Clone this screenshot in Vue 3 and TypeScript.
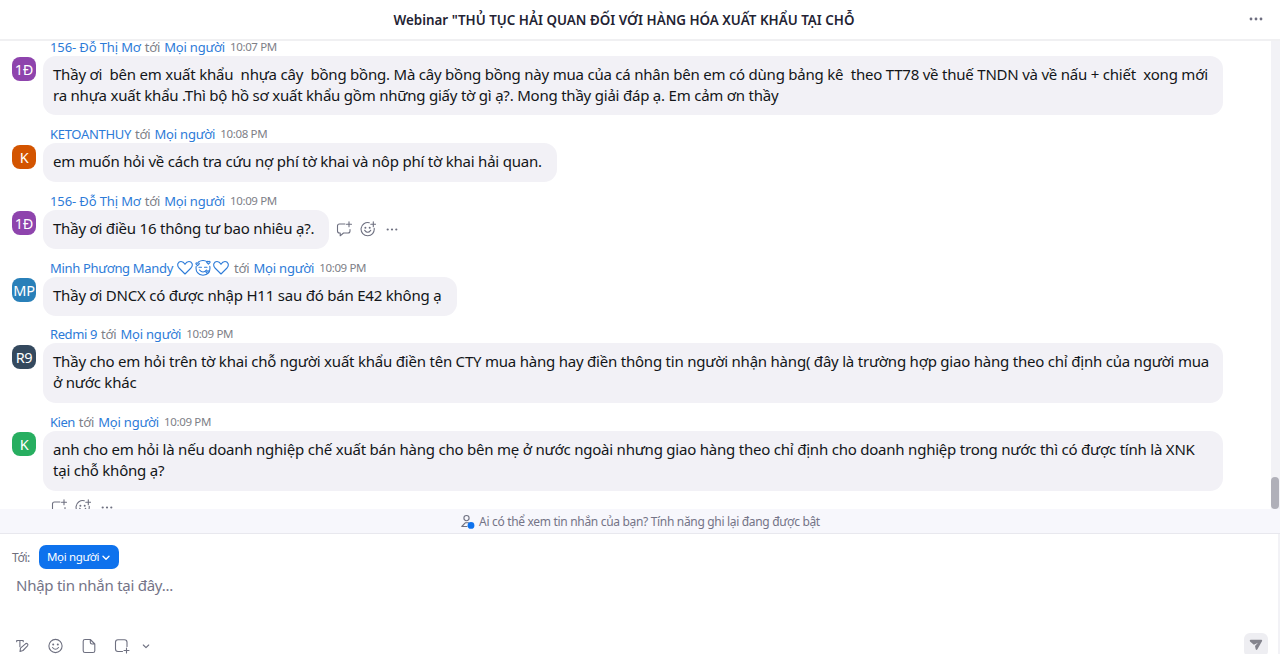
<script setup lang="ts">
interface Message {
  id: number;
  initials: string;
  color: string;
  sender: string;
  tracking: number;
  hearts?: boolean;
  time: string;
  lines: string[];
  width: number;
  actions?: 'side' | 'below';
}

const messages: Message[] = [
  {
    id: 1,
    initials: '1Đ',
    color: '#8e44ad',
    sender: '156- Đỗ Thị Mơ',
    tracking: -0.12,
    time: '10:07 PM',
    lines: [
      'Thầy ơi  bên em xuất khẩu  nhựa cây  bồng bồng. Mà cây bồng bồng này mua của cá nhân bên em có dùng bảng kê  theo TT78 về thuế TNDN và về nấu + chiết  xong mới',
      'ra nhựa xuất khẩu .Thì bộ hồ sơ xuất khẩu gồm những giấy tờ gì ạ?. Mong thầy giải đáp ạ. Em cảm ơn thầy',
    ],
    width: 1180,
  },
  {
    id: 2,
    initials: 'K',
    color: '#d35400',
    sender: 'KETOANTHUY',
    tracking: -0.3,
    time: '10:08 PM',
    lines: ['em muốn hỏi về cách tra cứu nợ phí tờ khai và nôp phí tờ khai hải quan.'],
    width: 514,
  },
  {
    id: 3,
    initials: '1Đ',
    color: '#8e44ad',
    sender: '156- Đỗ Thị Mơ',
    tracking: -0.12,
    time: '10:09 PM',
    lines: ['Thầy ơi điều 16 thông tư bao nhiêu ạ?.'],
    width: 286,
    actions: 'side',
  },
  {
    id: 4,
    initials: 'MP',
    color: '#2980b9',
    sender: 'Minh Phương Mandy',
    tracking: -0.32,
    hearts: true,
    time: '10:09 PM',
    lines: ['Thầy ơi DNCX có được nhập H11 sau đó bán E42 không ạ'],
    width: 414,
  },
  {
    id: 5,
    initials: 'R9',
    color: '#34495e',
    sender: 'Redmi 9',
    tracking: -0.4,
    time: '10:09 PM',
    lines: [
      'Thầy cho em hỏi trên tờ khai chỗ người xuất khẩu điền tên CTY mua hàng hay điền thông tin người nhận hàng( đây là trường hợp giao hàng theo chỉ định của người mua',
      'ở nước khác',
    ],
    width: 1180,
  },
  {
    id: 6,
    initials: 'K',
    color: '#27ae60',
    sender: 'Kien',
    tracking: -0.5,
    time: '10:09 PM',
    lines: [
      'anh cho em hỏi là nếu doanh nghiệp chế xuất bán hàng cho bên mẹ ở nước ngoài nhưng giao hàng theo chỉ định cho doanh nghiệp trong nước thì có được tính là XNK',
      'tại chỗ không ạ?',
    ],
    width: 1180,
    actions: 'below',
  },
];
</script>

<template>
  <div class="chat">
    <header class="topbar">
      <h1 class="title">Webinar "THỦ TỤC HẢI QUAN ĐỐI VỚI HÀNG HÓA XUẤT KHẨU TẠI CHỖ</h1>
      <svg class="more" width="14" height="4" viewBox="0 0 14 4">
        <circle cx="2" cy="2" r="1.4" /><circle cx="7" cy="2" r="1.4" /><circle cx="12" cy="2" r="1.4" />
      </svg>
    </header>

    <main class="history">
      <div class="messages">
        <article v-for="m in messages" :key="m.id" class="message">
          <div class="avatar" :style="{ background: m.color }">{{ m.initials }}</div>
          <div class="body">
            <div class="meta">
              <span class="name" :style="{ letterSpacing: m.tracking + 'px' }">{{ m.sender }}</span>
              <span v-if="m.hearts" class="emoji">
                <svg width="16" height="16" viewBox="0 0 16 16">
                  <path d="M8 14 2 8C-.7 4.800 1.300 1.500 4 1.500c1.900 0 3.200 1.300 4 2.800.8-1.500 2.100-2.800 4-2.800 2.700 0 4.700 3.300 2 6.500Z" />
                </svg>
                <svg width="16" height="16" viewBox="0 0 16 16">
                  <path d="M3.500 1.900Q8-.8 12.500 1.900M1.200 6.300C.3 11.500 3.300 15.200 8 15.200s7.700-3.700 6.800-8.900M4 7.300h2.500M9.500 7.300H12M4.500 10q3.500 4 7 0" />
                  <path d="M2.600 5.700 1.100 4.200c-.7-1.200.9-1.900 1.500-.9.600-1 2.200-.3 1.500.9ZM13.400 4.200l-1.500-1.500c-.7-1.200.9-1.900 1.500-.9.600-1 2.200-.3 1.500.9ZM12.500 13.700 11 12.200c-.7-1.200.9-1.900 1.500-.9.600-1 2.200-.3 1.500.9Z" />
                </svg>
                <svg width="16" height="16" viewBox="0 0 16 16">
                  <path d="M8 14 2 8C-.7 4.800 1.300 1.500 4 1.500c1.900 0 3.200 1.300 4 2.800.8-1.500 2.100-2.800 4-2.800 2.700 0 4.700 3.300 2 6.500Z" />
                </svg>
              </span>
              <span class="to">tới</span>
              <span class="name">Mọi người</span>
              <span class="time">{{ m.time }}</span>
            </div>
            <div class="row" :class="m.actions">
              <div class="bubble" :style="{ width: m.width + 'px' }">
                <div v-for="(line, i) in m.lines" :key="i" class="line">{{ line }}</div>
              </div>
              <div v-if="m.actions" class="actions">
                <svg width="16" height="16" viewBox="0 0 16 16">
                  <path d="M9 3H3.500Q1.500 3 1.500 5v5q0 2 2 2h.7v2.800L7.500 12H12q2 0 2-2V8.500M13 .8v5M10.500 3.300h5" />
                </svg>
                <svg width="16" height="16" viewBox="0 0 16 16">
                  <path d="M9.300 1.800A6.600 6.600 0 1 0 14.200 7.300M13.300.8v5M10.800 3.300h5M4.700 9.300q3 4 6 0" />
                  <circle class="dot" cx="5.4" cy="6.7" r="1" /><circle class="dot" cx="9.7" cy="6.7" r="1" />
                </svg>
                <svg width="16" height="16" viewBox="0 0 16 16">
                  <circle class="dot" cx="3.7" cy="8.5" r="1.1" /><circle class="dot" cx="8" cy="8.5" r="1.1" /><circle class="dot" cx="12.3" cy="8.5" r="1.1" />
                </svg>
              </div>
            </div>
          </div>
        </article>
      </div>
      <div class="scrollbar"><div class="thumb"></div></div>
    </main>

    <div class="notice">
      <svg width="14" height="15" viewBox="0 0 14 15">
        <circle cx="5.5" cy="4.1" r="2.6" />
        <path d="M7.500 8.700H4.500L.8 12.500H6" />
        <circle class="badge" cx="10" cy="11.4" r="3.4" />
      </svg>
      <span>Ai có thể xem tin nhắn của bạn? Tính năng ghi lại đang được bật</span>
    </div>

    <footer class="composer">
      <div class="recipient">
        <span class="label">Tới:</span>
        <button class="picker">
          <span>Mọi người</span>
          <svg width="8" height="6" viewBox="0 0 8 6"><path d="m1 1.300 3 3 3-3" /></svg>
        </button>
      </div>
      <div class="placeholder">Nhập tin nhắn tại đây...</div>
      <div class="tools">
        <svg width="16" height="16" viewBox="0 0 16 16">
          <path d="M1.700 3.700V2.500h6.500v1.200M4.900 2.500v6.300M5 13.500l.5-3.300 5-4.400q1-.8 2 .1.900 1 0 2L8 12.500Z" />
        </svg>
        <svg width="16" height="16" viewBox="0 0 16 16">
          <circle cx="7.5" cy="8" r="6.6" /><path d="M4.500 9.500q3 3.500 6 0" />
          <circle class="dot" cx="5.2" cy="6.5" r="1" /><circle class="dot" cx="9.8" cy="6.5" r="1" />
        </svg>
        <svg width="16" height="16" viewBox="0 0 16 16">
          <path d="M9.300 1.500H4Q2.200 1.500 2.200 3.300v9.400q0 1.800 1.800 1.800h8q1.800 0 1.800-1.800V6ZM9.300 1.500V4.300Q9.300 6 11 6h2.800" />
        </svg>
        <svg width="16" height="16" viewBox="0 0 16 16">
          <path d="M8.500 13.500H4Q1.500 13.500 1.500 11V4.200Q1.500 1.700 4 1.700h6.500Q13 1.700 13 4.200V8.500M12.500 10v5M10 12.500h5" />
        </svg>
        <svg class="caret" width="8" height="16" viewBox="0 0 8 16"><path d="m1.300 7 2.700 2.600L6.700 7" /></svg>
        <button class="send">
          <svg width="14" height="12" viewBox="0 0 14 12">
            <path d="M1.500.7h10.700q1.300.1.900 1.300L8.400 10.300q-1 1.300-1.700-.1L6 7.100l3-3.400-4.100 2L1 2.400Q.3 1.100 1.500.7Z" />
          </svg>
        </button>
      </div>
    </footer>
  </div>
</template>

<style>
body {
  background: #fff;
  overflow: hidden;
}
</style>

<style scoped>
.chat {
  display: flex;
  flex-direction: column;
  width: 1280px;
  height: 654px;
  box-sizing: border-box;
  overflow: hidden;
  background: #fff;
  color: #131619;
  font-family: 'Noto Sans', 'Open Sans', sans-serif;
}

svg {
  display: block;
  flex: none;
  fill: none;
  stroke: #6e7080;
  stroke-width: 1.1;
  stroke-linecap: round;
  stroke-linejoin: round;
}

.dot {
  fill: #6e7080;
  stroke: none;
}

.topbar {
  flex: none;
  display: grid;
  grid-template-columns: 1fr 32px;
  align-items: center;
  height: 39px;
  border-bottom: 2px solid #f0f0f2;
}

.title {
  margin: 0;
  text-align: center;
  font-size: 13.4px;
  font-weight: 600;
  line-height: 20px;
  color: #232333;
}

.more {
  margin: 0 0 2px 1px;
  fill: #6e6e80;
  stroke: none;
}

.history {
  flex: none;
  display: flex;
  height: 468px;
  overflow: hidden;
}

.messages {
  flex: 1;
  padding-left: 12px;
  margin-top: -13px;
}

.message {
  display: flex;
  align-items: flex-start;
}

.avatar {
  flex: none;
  width: 24px;
  height: 24px;
  margin: 29.3px 7px 0 0;
  border-radius: 8px;
  color: #fff;
  font-size: 14.5px;
  letter-spacing: -0.3px;
  line-height: 25px;
  text-align: center;
  white-space: nowrap;
}

.meta {
  display: flex;
  align-items: center;
  gap: 4px;
  height: 27.9px;
  padding: 9.6px 0 0 7px;
  box-sizing: border-box;
  font-size: 13px;
  letter-spacing: -0.2px;
  line-height: 18px;
  white-space: nowrap;
}

.name {
  color: #2d7bd8;
}

.to,
.time {
  color: #7e8087;
}

.time {
  font-size: 11.5px;
  letter-spacing: -0.35px;
  margin-left: 1px;
}

.emoji {
  display: flex;
  gap: 2px;
  margin-right: 1px;
}

.emoji svg {
  stroke: #2d7bd8;
}

.row.side {
  display: flex;
  align-items: center;
}

.bubble {
  box-sizing: border-box;
  padding: 8px 0 10px 10px;
  border-radius: 13px;
  background: #f2f1f6;
  font-size: 15px;
  letter-spacing: -0.216px;
  line-height: 20.8px;
}

.line {
  white-space: pre;
}

.actions {
  display: flex;
  gap: 8px;
  padding-left: 7px;
}

.below .actions {
  padding: 8px 0 0 8px;
}

.scrollbar {
  flex: none;
  width: 9px;
  background: #f2f2f6;
}

.thumb {
  width: 8px;
  height: 32px;
  margin-top: 436px;
  border-radius: 4px;
  background: #b0b0b9;
}

.notice {
  flex: none;
  display: flex;
  align-items: center;
  justify-content: center;
  gap: 4px;
  height: 25px;
  box-sizing: border-box;
  padding-left: 1px;
  border-bottom: 1px solid #e8e8ee;
  background: #f7f7fc;
  color: #747487;
  font-size: 12px;
  letter-spacing: -0.32px;
}

.notice .badge {
  fill: #0e72ed;
  stroke: none;
}

.composer {
  flex: 1;
  display: flex;
  flex-direction: column;
  padding: 11px 12px 0;
  border-right: 2px solid #f2f2f6;
}

.recipient {
  display: flex;
  align-items: center;
  gap: 8px;
  height: 24px;
}

.label {
  width: 19px;
  color: #6e6e7c;
  font-size: 12px;
  letter-spacing: -0.4px;
}

.picker {
  display: flex;
  align-items: center;
  gap: 3px;
  width: 80px;
  height: 24px;
  padding: 0 0 1px 8px;
  border: 0;
  border-radius: 7px;
  background: #0e72ed;
  color: #fff;
  font-family: inherit;
  font-size: 11.5px;
  letter-spacing: -0.35px;
}

.picker svg {
  margin-top: 3px;
  stroke: #fff;
  stroke-width: 1.4;
}

.placeholder {
  padding: 4px 4px 0;
  color: #747487;
  font-size: 15px;
  letter-spacing: -0.26px;
  line-height: 24px;
}

.tools {
  display: flex;
  align-items: center;
  gap: 17px;
  margin: 36px 0 0 3px;
  height: 24px;
}

.tools > svg {
  margin-top: 1px;
}

.tools .caret {
  margin-left: -5px;
}

.send {
  display: flex;
  align-items: center;
  justify-content: center;
  width: 24px;
  height: 24px;
  margin-left: auto;
  margin-right: -2px;
  padding: 0;
  border: 0;
  border-radius: 6px;
  background: #eeeef2;
}

.send svg {
  fill: #84848d;
  stroke: none;
}
</style>
